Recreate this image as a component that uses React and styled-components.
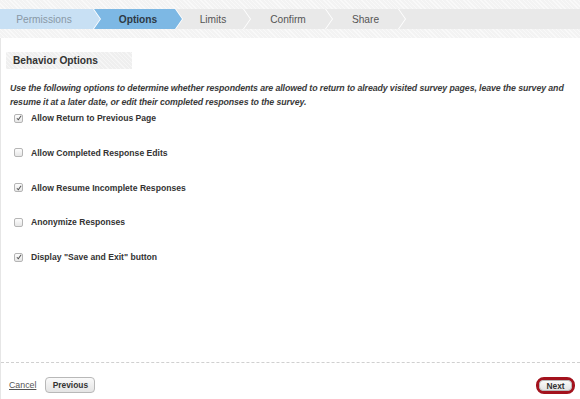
import React from "react";
import styled, { createGlobalStyle } from "styled-components";

const GlobalStyle = createGlobalStyle`
  html, body {
    margin: 0;
    padding: 0;
    background: #ffffff;
  }
  body {
    font-family: "Liberation Sans", Arial, sans-serif;
  }
`;

const Page = styled.div`
  width: 580px;
  height: 399px;
  display: flex;
  flex-direction: column;
  overflow: hidden;
`;

const TopArea = styled.div`
  background-color: #f3f3f3;
  background-image: repeating-linear-gradient(
    45deg,
    rgba(255, 255, 255, 0.5) 0px,
    rgba(255, 255, 255, 0.5) 1px,
    transparent 1px,
    transparent 3px
  );
  padding: 9px 0 9px 0;
`;

const Steps = styled.div`
  display: flex;
  height: 20px;
  background: #ffffff;
`;

const Step = styled.div`
  box-sizing: border-box;
  flex: ${(p) => (p.$fill ? "1" : "none")};
  width: ${(p) => (p.$fill ? "auto" : `${p.$w}px`)};
  margin-left: ${(p) => (p.$first ? "0" : "-6px")};
  display: flex;
  align-items: center;
  justify-content: center;
  padding-right: ${(p) => (p.$first ? "12px" : "0")};
  font-size: 10.2px;
  font-weight: ${(p) => (p.$active ? "bold" : "normal")};
  color: ${(p) => (p.$active ? "#2e3a45" : p.$done ? "#8898a6" : "#555555")};
  background: ${(p) => (p.$active ? "#7db8e4" : p.$done ? "#c8e0f4" : "#e9e9e9")};
  clip-path: ${(p) =>
    p.$fill
      ? "polygon(0 0, 100% 0, 100% 100%, 0 100%, 7px 50%)"
      : p.$first
      ? "polygon(0 0, calc(100% - 7px) 0, 100% 50%, calc(100% - 7px) 100%, 0 100%)"
      : "polygon(0 0, calc(100% - 7px) 0, 100% 50%, calc(100% - 7px) 100%, 0 100%, 7px 50%)"};
`;

const Content = styled.div`
  flex: 1;
  display: flex;
  flex-direction: column;
  border-left: 1px solid #e6e6e6;
  background: #ffffff;
`;

const Body = styled.div`
  flex: 1;
  padding: 14px 0 0 5px;
`;

const SectionTitle = styled.div`
  width: 119px;
  height: 17px;
  line-height: 17px;
  padding-left: 7px;
  background-color: #efefef;
  background-image: repeating-linear-gradient(
    45deg,
    rgba(255, 255, 255, 0.45) 0px,
    rgba(255, 255, 255, 0.45) 1px,
    transparent 1px,
    transparent 3px
  );
  font-size: 10.2px;
  font-weight: bold;
  color: #333333;
`;

const Intro = styled.p`
  margin: 12px 6px 0 4px;
  font-size: 8.8px;
  line-height: 14px;
  letter-spacing: -0.1px;
  font-weight: bold;
  font-style: italic;
  color: #3a3a3a;
`;

const OptionList = styled.div`
  display: flex;
  flex-direction: column;
  gap: 20.8px;
  margin: 2px 0 0 8px;
`;

const OptionRow = styled.label`
  display: flex;
  align-items: center;
  height: 14px;
  gap: 8px;
  font-size: 8.6px;
  font-weight: bold;
  color: #333333;
`;

const Box = styled.span`
  width: 7px;
  height: 7px;
  border: 1px solid #b5b5b5;
  border-radius: 2px;
  background: linear-gradient(#fdfdfd, #e6e6e6);
  display: flex;
  align-items: center;
  justify-content: center;
`;

const Footer = styled.div`
  border-top: 1px dashed #d0d0d0;
  height: 37px;
  display: flex;
  align-items: flex-start;
  padding: 14px 5px 0 8px;
  box-sizing: border-box;
`;

const CancelLink = styled.a`
  font-size: 8.8px;
  line-height: 16px;
  color: #555555;
  text-decoration: underline;
  margin-right: 9px;
`;

const Button = styled.button`
  font-family: "Liberation Sans", Arial, sans-serif;
  font-size: 8.4px;
  font-weight: bold;
  color: #333333;
  height: ${(p) => p.$h}px;
  width: ${(p) => p.$w}px;
  padding: 0;
  border: 1px solid #b8b8b8;
  border-radius: 4px;
  background: linear-gradient(#fafafa, #e4e4e4);
  cursor: pointer;
`;

const Ring = styled.span`
  margin-left: auto;
  border: 3px solid #a3121d;
  border-radius: 8px;
  display: flex;
`;

const Check = () => (
  <svg width="6" height="6" viewBox="0 0 7 7">
    <path d="M1 3.8 L2.7 5.6 L6 0.8" fill="none" stroke="#555" strokeWidth="1.2" />
  </svg>
);

const steps = [
  { label: "Permissions", w: 100, done: true },
  { label: "Options", w: 88, active: true },
  { label: "Limits", w: 74 },
  { label: "Confirm", w: 88 },
  { label: "Share", w: 79 },
];

const options = [
  { label: "Allow Return to Previous Page", checked: true },
  { label: "Allow Completed Response Edits", checked: false },
  { label: "Allow Resume Incomplete Responses", checked: true },
  { label: "Anonymize Responses", checked: false },
  { label: 'Display "Save and Exit" button', checked: true },
];

const App = () => {
  return (
    <>
      <GlobalStyle />
      <Page>
        <TopArea>
          <Steps>
            {steps.map((s, i) => (
              <Step key={s.label} $w={s.w} $first={i === 0} $active={s.active} $done={s.done}>
                {s.label}
              </Step>
            ))}
            <Step $fill />
          </Steps>
        </TopArea>
        <Content>
          <Body>
            <SectionTitle>Behavior Options</SectionTitle>
            <Intro>
              Use the following options to determine whether respondents are allowed to return to
              already visited survey pages, leave the survey and resume it at a later date, or edit
              their completed responses to the survey.
            </Intro>
            <OptionList>
              {options.map((o) => (
                <OptionRow key={o.label}>
                  <Box>{o.checked && <Check />}</Box>
                  {o.label}
                </OptionRow>
              ))}
            </OptionList>
          </Body>
          <Footer>
            <CancelLink href="#">Cancel</CancelLink>
            <Button $w={50} $h={16}>Previous</Button>
            <Ring>
              <Button $w={33} $h={11}>Next</Button>
            </Ring>
          </Footer>
        </Content>
      </Page>
    </>
  );
};

export default App;
